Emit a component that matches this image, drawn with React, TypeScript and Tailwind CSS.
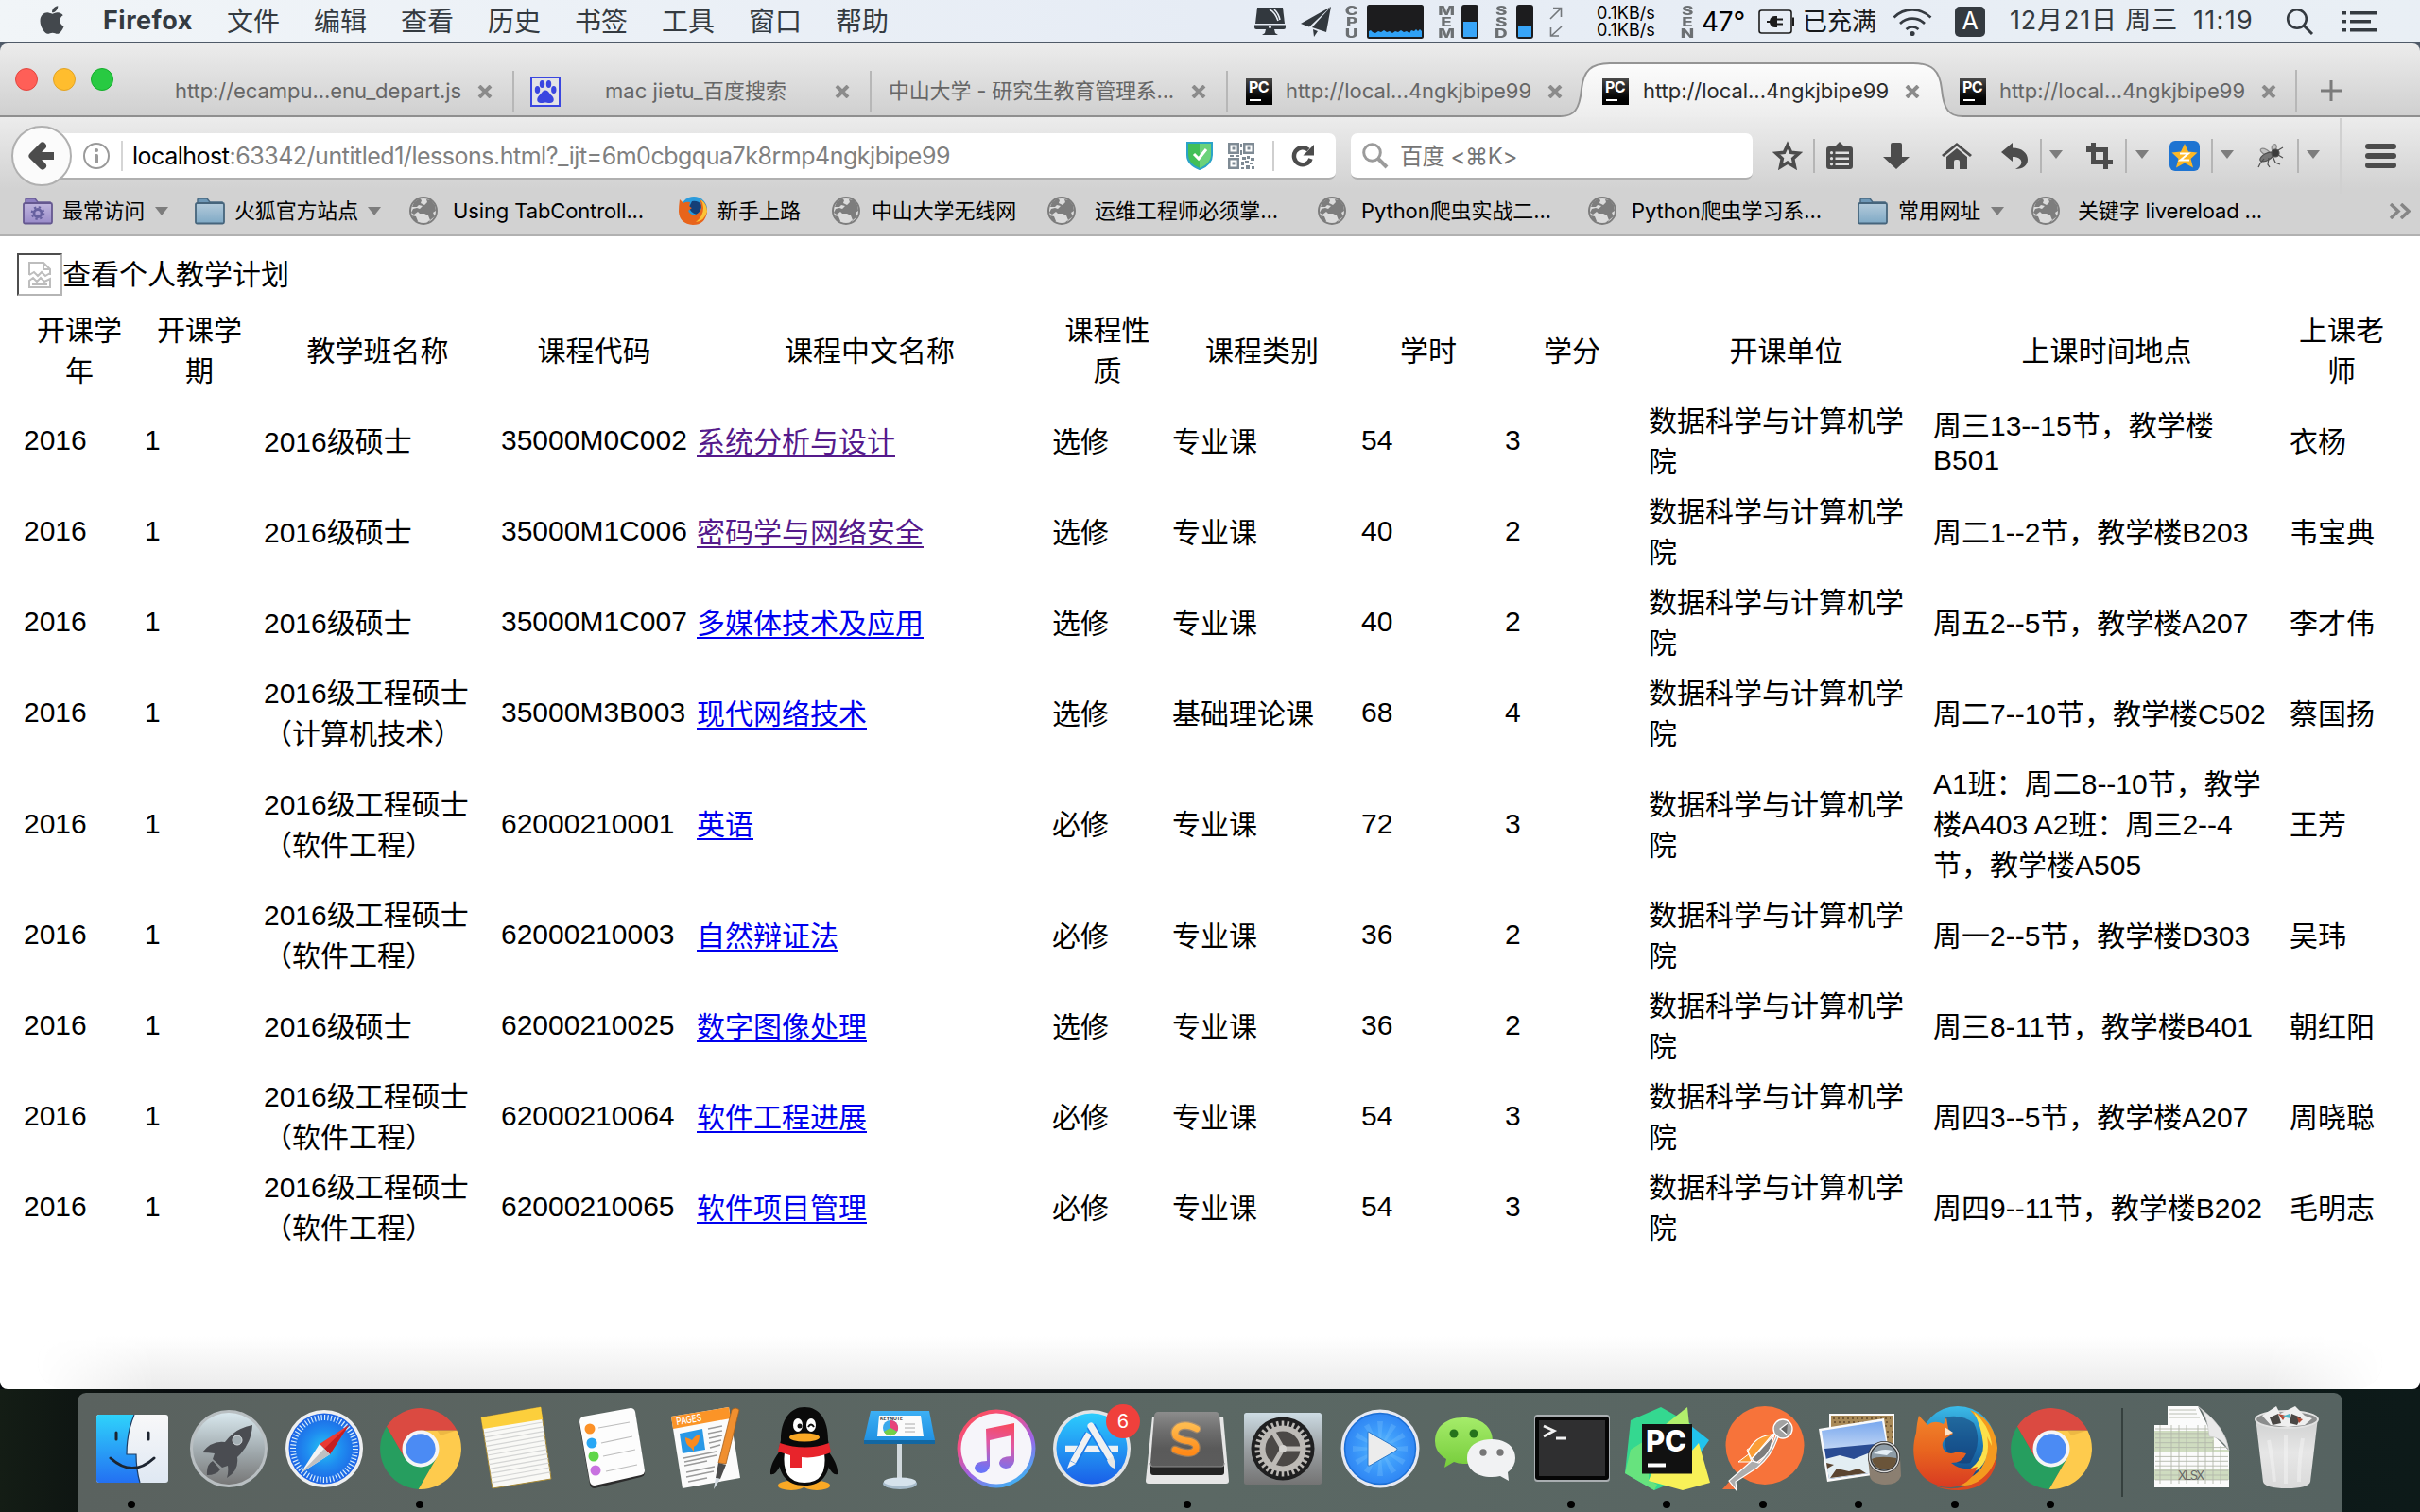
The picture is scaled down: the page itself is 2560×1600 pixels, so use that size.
import { useLayoutEffect, useRef, type ReactNode } from 'react'
import { FaApple } from 'react-icons/fa'

/* Single line of text whose tracking is adjusted so that it fills `w` pixels. */
function Fit({ w, className = '', children }: { w: number; className?: string; children: ReactNode }) {
  const ref = useRef<HTMLSpanElement>(null)
  useLayoutEffect(() => {
    const el = ref.current
    if (!el) return
    el.style.letterSpacing = '0px'
    const n = (el.textContent || '').length
    const natural = el.getBoundingClientRect().width
    el.style.letterSpacing = `${(w - natural) / n}px`
  }, [w])
  return (
    <span ref={ref} className={`inline-block shrink-0 whitespace-pre ${className}`}>
      {children}
    </span>
  )
}

/* ---------- Menu bar ---------- */

function Stacked({ t, className }: { t: string; className: string }) {
  return (
    <div className={`flex w-[16px] shrink-0 flex-col items-center text-[13px] leading-[12px] font-extrabold text-[#6c7073] ${className}`}>
      {t.split('').map((c, i) => (
        <span key={i} className="h-[12px] scale-x-[1.45]">{c}</span>
      ))}
    </div>
  )
}

function MenuBar() {
  return (
    <div className="flex h-[44px] shrink-0 items-center bg-linear-to-r from-[#f1f5f8] via-[#e6ecf5] to-[#e9eff5] pt-[1px] text-[28px] text-[#343a40]">
      <FaApple className="ml-[38px] mb-[4px] size-[34px] shrink-0 text-[#43484d]" />
      <Fit w={95} className="ml-[37px] text-[27px] font-bold">Firefox</Fit>
      <div className="ml-[36px] flex shrink-0 gap-[36px]">
        {['文件', '编辑', '查看', '历史', '书签', '工具', '窗口', '帮助'].map((m) => (
          <Fit key={m} w={56}>{m}</Fit>
        ))}
      </div>
      <svg className="ml-[386px] h-[29px] w-[35px] shrink-0" viewBox="0 0 35 29" fill="#32383e">
        <path d="M4 0H31L33 17H2Z" />
        <path d="M17 2C21 4 24 8 26 14M22 2C25 5 27 8 28 13" stroke="#e8edf5" strokeWidth="1.6" fill="none" />
        <path d="M1 18.500H34V21Q34 23 32 23H3Q1 23 1 21Z" />
        <circle cx="17.500" cy="20.500" r="1.500" fill="#e8edf5" />
        <path d="M13 23H22L23 27L26 29H9L12 27Z" />
      </svg>
      <svg className="ml-[15px] h-[32px] w-[32px] shrink-0" viewBox="0 0 32 32" fill="#32383e">
        <path d="M32 0L0 18L9 21.500Z" />
        <path d="M32 0L12 22L27 27Z" />
        <path d="M13 24L18 26L14 32Z" />
      </svg>
      <Stacked t="CPU" className="ml-[14px]" />
      <svg className="ml-[8px] h-[36px] w-[60px] shrink-0" viewBox="0 0 60 36">
        <rect width="60" height="36" rx="2.500" fill="#1c1c1e" />
        <path d="M2 34V28L4 27L6 29L9 30L12 28L15 29L18 27L21 29L24 28L27 30L30 28L33 29L36 27L39 29L42 28L45 30L47 27L50 28L52 26L54 28L56 26L58 28V34Z" fill="#2fa1f5" />
      </svg>
      <Stacked t="MEM" className="ml-[16px]" />
      <div className="ml-[8px] flex h-[36px] w-[18px] shrink-0 flex-col justify-end rounded-[3px] bg-[#1c1c1e] p-[2px]">
        <div className="h-[16px] bg-[#38a5f8]" />
      </div>
      <Stacked t="SSD" className="ml-[16px]" />
      <div className="ml-[8px] flex h-[36px] w-[18px] shrink-0 flex-col justify-end rounded-[3px] bg-[#1c1c1e] p-[2px]">
        <div className="h-[12px] bg-[#38a5f8]" />
      </div>
      <svg className="ml-[17px] h-[32px] w-[14px] shrink-0" viewBox="0 0 14 32" fill="none" stroke="#73777b" strokeWidth="1.600">
        <path d="M1 13L12 2M4 1.500H12.500V11M13 21L2 31M1.500 22V31H10" />
      </svg>
      <div className="ml-[36px] flex w-[73px] shrink-0 flex-col text-[18px] leading-[18px] text-black">
        <Fit w={73} className="h-[18px]">0.1KB/s</Fit>
        <Fit w={73} className="h-[18px]">0.1KB/s</Fit>
      </div>
      <Stacked t="SEN" className="ml-[15px]" />
      <Fit w={46} className="ml-[7px] text-[28px] text-black">47°</Fit>
      <svg className="ml-[14px] h-[26px] w-[38px] shrink-0" viewBox="0 0 38 26">
        <rect x="1" y="1" width="34" height="24" rx="2.500" fill="none" stroke="#1c1c1c" strokeWidth="1.600" />
        <path d="M36 8.500H38V17.500H36Z" fill="#1c1c1c" />
        <path d="M9 12H12Q13 7 18 7H20V9.500H26V11.500H20V14.500H26V16.500H20V19H18Q13 19 12 14H9Z" fill="#1c1c1c" />
      </svg>
      <Fit w={78} className="ml-[9px] text-[26px] text-[#17191b]">已充满</Fit>
      <svg className="ml-[17px] h-[30px] w-[42px] shrink-0" viewBox="0 0 42 30" fill="none" stroke="#343a40" strokeWidth="2.600">
        <path d="M1.500 10.500A27.500 27.500 0 0 1 40.500 10.500M8 17A18.500 18.500 0 0 1 34 17M14.500 23A9.500 9.500 0 0 1 27.500 23" />
        <circle cx="21" cy="27.500" r="2.600" fill="#343a40" stroke="none" />
      </svg>
      <div className="ml-[24px] flex h-[32px] w-[32px] shrink-0 items-center justify-center rounded-[5px] bg-[#343a40] text-[25px] text-white">A</div>
      <Fit w={178} className="ml-[26px] text-[27px]">12月21日 周三</Fit>
      <Fit w={64} className="ml-[16px] text-[27px]">11:19</Fit>
      <svg className="ml-[34px] h-[30px] w-[30px] shrink-0" viewBox="0 0 30 30" fill="none" stroke="#343a40" strokeWidth="2.600">
        <circle cx="12" cy="12" r="9.800" />
        <path d="M19 19L28 28" strokeWidth="3" />
      </svg>
      <svg className="ml-[30px] h-[22px] w-[37px] shrink-0" viewBox="0 0 37 22" fill="#343a40">
        <path d="M0 0H4V3.500H0ZM8 0H37V3.500H8ZM0 9H4V12.500H0ZM8 9H30V12.500H8ZM0 18H4V21.500H0ZM8 18H37V21.500H8Z" />
      </svg>
    </div>
  )
}

/* ---------- Tab strip ---------- */

function PcIcon() {
  return (
    <div className="flex size-[28px] shrink-0 flex-col bg-linear-to-b from-[#4a4a4a] to-black pl-[3px]">
      <span className="h-[19px] text-[16px] leading-[19px] font-bold tracking-[-0.5px] text-white">PC</span>
      <span className="mt-[3px] ml-[1px] h-[2px] w-[12px] bg-white" />
    </div>
  )
}

function Close() {
  return (
    <svg className="h-[14px] w-[16px] shrink-0" viewBox="0 0 16 14" stroke="#8b8b8b" strokeWidth="4" fill="none">
      <path d="M2 1L14 13M14 1L2 13" />
    </svg>
  )
}

function ActiveShape() {
  return (
    <svg className="absolute top-0 left-[-23px] h-[58px] w-[425px]" viewBox="0 0 425 58">
      <defs>
        <linearGradient id="tabfill" x1="0" y1="0" x2="0" y2="1">
          <stop offset="0" stopColor="#fcfcfc" />
          <stop offset="1" stopColor="#ededed" />
        </linearGradient>
      </defs>
      <path d="M0 57C14 57 20 50 22 28C24 9 32 1 52 1H373C393 1 401 9 403 28C405 50 411 57 425 57V58H0Z" fill="url(#tabfill)" />
      <path d="M0 57C14 57 20 50 22 28C24 9 32 1 52 1H373C393 1 401 9 403 28C405 50 411 57 425 57" fill="none" stroke="#949494" strokeWidth="2" />
    </svg>
  )
}

function Sep() {
  return <span className="h-[44px] w-[2px] shrink-0 bg-[#b7b7b7]" />
}

function TabStrip() {
  return (
    <div className="flex h-[78px] shrink-0 items-end rounded-t-[8px] border-b-2 border-[#8f8f8f] bg-linear-to-b from-[#ececec] to-[#d0d0d0] text-[22px] text-[#666]">
      <div className="flex h-[76px] w-[165px] shrink-0 gap-[16px] pt-[26px] pl-[16px]">
        <span className="size-[24px] rounded-full border border-[#e2463f] bg-[#ff5f57]" />
        <span className="size-[24px] rounded-full border border-[#e1a325] bg-[#ffbd2e]" />
        <span className="size-[24px] rounded-full border border-[#14ae2b] bg-[#28ca42]" />
      </div>
      <div className="flex h-[56px] w-[377px] shrink-0 items-center pt-[5px]">
        <Fit w={303} className="ml-[20px]">http://ecampu...enu_depart.js</Fit>
        <span className="ml-[17px] flex"><Close /></span>
      </div>
      <div className="flex h-[56px] w-[378px] shrink-0 items-center pt-[5px]">
        <Sep />
        <svg className="ml-[17px] size-[32px] shrink-0" viewBox="0 0 32 32" fill="#3a46e0">
          <rect x="1" y="1" width="30" height="30" fill="#e3e3e6" stroke="#3a46e0" strokeWidth="2" />
          <ellipse cx="7.500" cy="14" rx="2.700" ry="4" />
          <ellipse cx="12.500" cy="8" rx="2.700" ry="4" />
          <ellipse cx="19.500" cy="8" rx="2.700" ry="4" />
          <ellipse cx="24.800" cy="14" rx="2.700" ry="4" />
          <path d="M16 14.500C19 14.500 20 18 23 20.500C26 23.500 25 28 21 28C18 28 17 27.500 16 27.500C15 27.500 14 28 11 28C7 28 6 23.500 9 20.500C12 18 13 14.500 16 14.500Z" />
        </svg>
        <Fit w={192} className="ml-[47px]">mac jietu_百度搜索</Fit>
        <span className="ml-[51px] flex"><Close /></span>
      </div>
      <div className="flex h-[56px] w-[377px] shrink-0 items-center pt-[5px]">
        <Sep />
        <Fit w={302} className="ml-[18px]">中山大学 - 研究生教育管理系...</Fit>
        <span className="ml-[18px] flex"><Close /></span>
      </div>
      <div className="flex h-[56px] w-[377px] shrink-0 items-center pt-[5px]">
        <Sep />
        <span className="ml-[19px] flex"><PcIcon /></span>
        <Fit w={260} className="ml-[14px]">http://local...4ngkjbipe99</Fit>
        <span className="ml-[17px] flex"><Close /></span>
      </div>
      <div className="relative z-10 mb-[-2px] flex h-[58px] w-[378px] shrink-0 items-center pt-[3px] text-[#2a2a2a]">
        <ActiveShape />
        <div className="relative flex items-center">
          <span className="ml-[21px] flex"><PcIcon /></span>
          <Fit w={260} className="ml-[15px]">http://local...4ngkjbipe99</Fit>
          <span className="ml-[17px] flex"><Close /></span>
        </div>
      </div>
      <div className="flex h-[56px] w-[376px] shrink-0 items-center pt-[5px]">
        <span className="ml-[21px] flex"><PcIcon /></span>
        <Fit w={260} className="ml-[14px]">http://local...4ngkjbipe99</Fit>
        <span className="ml-[17px] flex"><Close /></span>
      </div>
      <div className="flex h-[56px] shrink-0 items-center pt-[4px]">
        <Sep />
        <svg className="ml-[25px] size-[22px]" viewBox="0 0 22 22" fill="#7b7b7b"><path d="M9.500 0H12.500V9.500H22V12.500H12.500V22H9.500V12.500H0V9.500H9.500Z" /></svg>
      </div>
    </div>
  )
}

/* ---------- Navigation toolbar ---------- */

function Caret({ className = '' }: { className?: string }) {
  return (
    <svg className={`h-[9px] w-[14px] shrink-0 ${className}`} viewBox="0 0 14 9"><path d="M0 0H14L7 9Z" fill="#7d7d7d" /></svg>
  )
}

function VLine({ className = '' }: { className?: string }) {
  return <span className={`h-[36px] w-[2px] shrink-0 bg-[#b5b5b5] ${className}`} />
}

function NavBar() {
  return (
    <div className="flex h-[82px] shrink-0 items-center">
      <div className="z-10 ml-[12px] flex size-[64px] shrink-0 items-center justify-center rounded-full border-2 border-[#b0b0b0] bg-[#fbfbfb]">
        <svg className="size-[32px]" viewBox="0 0 32 32" fill="none" stroke="#4c4c4c" strokeLinecap="round" strokeLinejoin="round">
          <path d="M29 16H8" strokeWidth="8" strokeLinecap="butt" />
          <path d="M17 5.500L6.500 16L17 26.500" strokeWidth="8" />
        </svg>
      </div>
      <div className="ml-[-26px] flex h-[49px] w-[1363px] shrink-0 items-center rounded-r-[7px] border-b-2 border-[#b0b0b0] bg-white pt-[2px] text-[25px] text-black">
        <svg className="ml-[38px] size-[28px] shrink-0" viewBox="0 0 28 28">
          <circle cx="14" cy="14" r="13" fill="none" stroke="#9a9a9a" strokeWidth="2" />
          <circle cx="14" cy="8" r="2.100" fill="#9a9a9a" />
          <rect x="12" y="12" width="4" height="10" rx="1.500" fill="#9a9a9a" />
        </svg>
        <span className="ml-[12px] h-[32px] w-[2px] shrink-0 bg-[#d5d5d5]" />
        <Fit w={865} className="ml-[10px] pt-[2px]">
          localhost<span className="text-[#808080]">:63342/untitled1/lessons.html?_ijt=6m0cbgqua7k8rmp4ngkjbipe99</span>
        </Fit>
        <svg className="ml-[250px] h-[30px] w-[28px] shrink-0" viewBox="0 0 28 30">
          <path d="M1 1H27V14C27 21 22 26 14 29C6 26 1 21 1 14Z" fill="#41bf57" stroke="#2ba3c8" strokeWidth="2" />
          <path d="M14 2H26V14C26 20 21 25 14 28Z" fill="#6bd27a" />
          <path d="M8 13L13 18L21 8" fill="none" stroke="#fff" strokeWidth="3" />
        </svg>
        <svg className="ml-[16px] size-[28px] shrink-0" viewBox="0 0 28 28" fill="#7e8a94">
          <path fillRule="evenodd" d="M0 0H12V12H0ZM2.500 2.500V9.500H9.500V2.500ZM16 0H28V12H16ZM18.500 2.500V9.500H25.500V2.500ZM0 16H12V28H0ZM2.500 18.500V25.500H9.500V18.500Z" />
          <path d="M4.500 4.500H7.500V7.500H4.500ZM20.500 4.500H23.500V7.500H20.500ZM4.500 20.500H7.500V23.500H4.500ZM13 1H15V5H13ZM13 8H15V13H13ZM15 15H19V18H15ZM20 14H23V17H20ZM24 16H28V19H24ZM18 19H22V22H18ZM14 20H17V24H14ZM23 21H27V23H23ZM19 24H23V28H19ZM25 25H28V28H25ZM14 26H17V28H14ZM2 13H6V15H2ZM8 13H12V15H8Z" />
        </svg>
        <span className="ml-[19px] h-[32px] w-[2px] shrink-0 bg-[#cfcfcf]" />
        <svg className="ml-[18px] h-[24px] w-[26px] shrink-0" viewBox="0 0 26 24">
          <path d="M20.500 15A9 9 0 1 1 18 5.500" fill="none" stroke="#4c4c4c" strokeWidth="4.500" />
          <path d="M24 0V11.500H12.500Z" fill="#4c4c4c" />
        </svg>
      </div>
      <div className="ml-[16px] flex h-[49px] w-[425px] shrink-0 items-center rounded-[7px] border-b-2 border-[#b0b0b0] bg-white pt-[2px] text-[24px] text-[#757575]">
        <svg className="ml-[12px] size-[28px]" viewBox="0 0 28 28" fill="none" stroke="#9b9b9b" strokeWidth="3">
          <circle cx="10.500" cy="10.500" r="8.800" />
          <path d="M17 17L26 26" strokeWidth="4" />
        </svg>
        <Fit w={124} className="ml-[12px] pt-[2px]">{'百度 <⌘K>'}</Fit>
      </div>
      <svg className="ml-[21px] size-[32px] shrink-0" viewBox="0 0 32 32" fill="none" stroke="#4c4c4c" strokeWidth="3.600">
        <path d="M16 4.500L19.600 12.200L28 13.100L21.700 18.800L23.500 27.500L16 23L8.500 27.500L10.300 18.800L4 13.100L12.400 12.200Z" />
      </svg>
      <VLine className="ml-[11px]" />
      <svg className="ml-[12px] h-[30px] w-[28px] shrink-0" viewBox="0 0 28 30" fill="#4c4c4c">
        <path d="M14 0L19 5H25Q28 5 28 8V26Q28 29 25 29H3Q0 29 0 26V8Q0 5 3 5H9Z" />
        <path d="M9.500 10.500H24V13H9.500ZM9.500 16.500H24V19H9.500ZM9.500 22.500H24V25H9.500Z" fill="#e0e0e0" />
        <circle cx="5.500" cy="11.700" r="1.600" fill="#e0e0e0" /><circle cx="5.500" cy="17.700" r="1.600" fill="#e0e0e0" /><circle cx="5.500" cy="23.700" r="1.600" fill="#e0e0e0" />
      </svg>
      <svg className="ml-[32px] h-[28px] w-[28px] shrink-0" viewBox="0 0 28 28" fill="#4c4c4c">
        <path d="M10 0H18Q20 0 20 2V15H28L14 28L0 15H8V2Q8 0 10 0Z" />
      </svg>
      <svg className="ml-[34px] h-[28px] w-[32px] shrink-0" viewBox="0 0 32 28" fill="#4c4c4c">
        <path d="M16 0L32 13L30 15L16 3.500L2 15L0 13Z" />
        <path d="M16 6L27 15V28H19V20Q19 18 17 18H15Q13 18 13 20V28H5V15Z" />
      </svg>
      <svg className="ml-[31px] h-[28px] w-[28px] shrink-0" viewBox="0 0 28 28" fill="#4c4c4c">
        <path d="M0 10L12 0V5.500C22 5.500 28 11 28 18C28 24 23 28 15 28C21 25 23 21 20 17.500C18 15.500 15 15 12 15V20Z" />
      </svg>
      <VLine className="ml-[13px]" />
      <Caret className="ml-[8px] mb-[3px]" />
      <svg className="ml-[25px] size-[28px] shrink-0" viewBox="0 0 28 28" fill="#4c4c4c">
        <path fillRule="evenodd" d="M5 0H10V5H23V18H28V23H23V28H18V23H5V10H0V4H5ZM10 10V18H18V10Z" />
      </svg>
      <VLine className="ml-[13px]" />
      <Caret className="ml-[9px] mb-[3px]" />
      <svg className="ml-[22px] size-[32px] shrink-0" viewBox="0 0 32 32">
        <rect width="32" height="32" rx="6" fill="#1e74d2" />
        <path d="M16 3L20 11.500L29.500 12.500L22.500 19L25 28.500L16 23.500L7 28.500L9.500 19L2.500 12.500L12 11.500Z" fill="#fdb826" />
        <path d="M11 13.500H20L11.500 20.500H21" fill="none" stroke="#fff" strokeWidth="2" />
      </svg>
      <VLine className="ml-[12px]" />
      <Caret className="ml-[8px] mb-[3px]" />
      <svg className="ml-[22px] h-[26px] w-[32px] shrink-0" viewBox="0 0 32 26" fill="none" stroke="#4f4f4f" strokeWidth="1.200">
        <path d="M16 9C8 1 1 7 12 12M19 8C15 -1 27 -2 22 7" fill="#c4c4c4" stroke="#888" />
        <ellipse cx="13" cy="14" rx="8" ry="3.600" transform="rotate(-28 13 14)" fill="#767676" />
        <circle cx="22" cy="10" r="4" fill="#3c3c3c" />
        <path d="M19 13L22 20L27 22M15 15L14 22L16 25M10 16L6 21L4 25M25 12L30 15M25 7L30 4" />
      </svg>
      <VLine className="ml-[13px]" />
      <Caret className="ml-[8px] mb-[3px]" />
      <span className="ml-[21px] h-[80px] w-[2px] shrink-0 bg-[#d0d0d0]" />
      <div className="ml-[25px] flex w-[33px] shrink-0 flex-col gap-[4px]">
        <span className="h-[6px] rounded-[3px] bg-[#4c4c4c]" />
        <span className="h-[6px] rounded-[3px] bg-[#4c4c4c]" />
        <span className="h-[6px] rounded-[3px] bg-[#4c4c4c]" />
      </div>
    </div>
  )
}

/* ---------- Bookmarks toolbar ---------- */

function Folder({ smart = false }: { smart?: boolean }) {
  return (
    <svg className="h-[29px] w-[32px] shrink-0" viewBox="0 0 32 29">
      <defs>
        <linearGradient id="fb" x1="0" y1="0" x2="0" y2="1"><stop offset="0" stopColor="#b4cbdb" /><stop offset="1" stopColor="#7fa9c5" /></linearGradient>
        <linearGradient id="fp" x1="0" y1="0" x2="0" y2="1"><stop offset="0" stopColor="#c0b6de" /><stop offset="1" stopColor="#998bc9" /></linearGradient>
      </defs>
      <path d="M3 5V2Q3 1 4 1H13L16 5H29V10H3Z" fill={smart ? '#8d7fc0' : '#6e98b7'} stroke={smart ? '#6a5d96' : '#4a6a82'} strokeWidth="1.500" />
      <rect x="1" y="6" width="30" height="21.500" rx="1.500" fill={smart ? 'url(#fp)' : 'url(#fb)'} stroke={smart ? '#655890' : '#46657c'} strokeWidth="1.800" />
      {smart && <circle cx="16" cy="16.500" r="4" fill="none" stroke="#66609f" strokeWidth="2.800" />}
      {smart && <circle cx="16" cy="16.500" r="6.300" fill="none" stroke="#66609f" strokeWidth="2" strokeDasharray="2.400 2.550" />}
    </svg>
  )
}

function Globe() {
  return (
    <svg className="size-[30px] shrink-0" viewBox="0 0 30 30">
      <circle cx="15" cy="15" r="14" fill="#dcdcdc" stroke="#7d7d7d" strokeWidth="2" />
      <path d="M5 6L11 2L13 4L12 7L16 9L19 6L18 3L23 4L27 9L28 15L25 17L27 21L22 25L20 20L16 18L11 18L9 16L5 19L2 17L4 13L8 12L11 13L14 10L10 9L8 11L3 11Z" fill="#7d7d7d" />
      <path d="M3 20L7 21L9 26L8 27L5 25ZM20 26L23 25L19 28Z" fill="#7d7d7d" />
    </svg>
  )
}

function MiniFirefox() {
  return (
    <svg className="size-[32px] shrink-0" viewBox="0 0 32 32">
      <circle cx="17" cy="15" r="14" fill="#2a9bdc" />
      <path d="M15 6Q22 5 25 10Q25 16 20 20Q13 18 12 12Z" fill="#143f78" />
      <path d="M2 4L6 8Q9 6 13 7L12 11Q14 13 15 13L11 16Q13 21 19 20Q24 18 25 13Q25 8 23 4Q31 7 31 17Q29 31 16 31Q2 30 1 17Q1 11 2 4Z" fill="#e8641b" />
      <path d="M24 4Q31 9 31 17Q28 27 19 28Q27 22 27 13Q27 8 24 4Z" fill="#fbc336" />
    </svg>
  )
}

function Bookmarks() {
  return (
    <div className="flex h-[44px] shrink-0 items-center border-b-2 border-[#b1b1b1] pb-[8px] pl-[24px] text-[22px] text-black">
      <Folder smart /><Fit w={87} className="ml-[10px] pt-[1px]">最常访问</Fit><Caret className="ml-[11px] h-[7px] w-[12px]" />
      <span className="ml-[28px] flex"><Folder /></span><Fit w={131} className="ml-[10px] pt-[1px]">火狐官方站点</Fit><Caret className="ml-[10px] h-[7px] w-[12px]" />
      <span className="ml-[30px] flex"><Globe /></span><Fit w={202} className="ml-[16px] pt-[1px]">Using TabControll...</Fit>
      <span className="ml-[36px] flex"><MiniFirefox /></span><Fit w={88} className="ml-[10px] pt-[1px]">新手上路</Fit>
      <span className="ml-[33px] flex"><Globe /></span><Fit w={153} className="ml-[12px] pt-[1px]">中山大学无线网</Fit>
      <span className="ml-[33px] flex"><Globe /></span><Fit w={194} className="ml-[20px] pt-[1px]">运维工程师必须掌...</Fit>
      <span className="ml-[42px] flex"><Globe /></span><Fit w={201} className="ml-[16px] pt-[1px]">Python爬虫实战二...</Fit>
      <span className="ml-[39px] flex"><Globe /></span><Fit w={201} className="ml-[16px] pt-[1px]">Python爬虫学习系...</Fit>
      <span className="ml-[38px] flex"><Folder /></span><Fit w={87} className="ml-[11px] pt-[1px]">常用网址</Fit><Caret className="ml-[11px] h-[7px] w-[12px]" />
      <span className="ml-[29px] flex"><Globe /></span><Fit w={195} className="ml-[19px] pt-[1px]">关键字 livereload ...</Fit>
      <svg className="ml-auto mr-[9px] h-[17px] w-[24px] shrink-0" viewBox="0 0 24 17" fill="none" stroke="#858585" strokeWidth="3.500"><path d="M2 1L10 8.500L2 16M13 1L21 8.500L13 16" /></svg>
    </div>
  )
}

/* ---------- Page ---------- */

const HEAD = ['开课学\n年', '开课学\n期', '教学班名称', '课程代码', '课程中文名称', '课程性\n质', '课程类别', '学时', '学分', '开课单位', '上课时间地点', '上课老\n师']
const UNIT = '数据科学与计算机学\n院'
const M = '2016级硕士'
const SE = '2016级工程硕士\n（软件工程）'
const ROWS: string[][] = [
  ['2016', '1', M, '35000M0C002', '系统分析与设计', '选修', '专业课', '54', '3', UNIT, '周三13--15节，教学楼\nB501', '衣杨'],
  ['2016', '1', M, '35000M1C006', '密码学与网络安全', '选修', '专业课', '40', '2', UNIT, '周二1--2节，教学楼B203', '韦宝典'],
  ['2016', '1', M, '35000M1C007', '多媒体技术及应用', '选修', '专业课', '40', '2', UNIT, '周五2--5节，教学楼A207', '李才伟'],
  ['2016', '1', '2016级工程硕士\n（计算机技术）', '35000M3B003', '现代网络技术', '选修', '基础理论课', '68', '4', UNIT, '周二7--10节，教学楼C502', '蔡国扬'],
  ['2016', '1', SE, '62000210001', '英语', '必修', '专业课', '72', '3', UNIT, 'A1班：周二8--10节，教学\n楼A403 A2班：周三2--4\n节，教学楼A505', '王芳'],
  ['2016', '1', SE, '62000210003', '自然辩证法', '必修', '专业课', '36', '2', UNIT, '周一2--5节，教学楼D303', '吴玮'],
  ['2016', '1', M, '62000210025', '数字图像处理', '选修', '专业课', '36', '2', UNIT, '周三8-11节，教学楼B401', '朝红阳'],
  ['2016', '1', SE, '62000210064', '软件工程进展', '必修', '专业课', '54', '3', UNIT, '周四3--5节，教学楼A207', '周晓聪'],
  ['2016', '1', SE, '62000210065', '软件项目管理', '必修', '专业课', '54', '3', UNIT, '周四9--11节，教学楼B202', '毛明志'],
]
const GRID = 'grid grid-cols-[118px_116px_241px_197px_366px_117px_190px_142px_142px_291px_367px_110px] gap-x-[10px] items-center'

function Page() {
  return (
    <div className="relative flex h-[1220px] shrink-0 flex-col rounded-b-[8px] bg-white font-['Liberation_Sans','Noto_Sans_CJK_SC',sans-serif] text-[30px] leading-[43px] text-black">
      <div className="absolute bottom-0 left-[40px] h-[56px] w-[2480px] rounded-[30px] bg-linear-to-b from-white to-[#ebebeb] mask-x-from-95% mask-x-to-100%" />
      <div className="flex h-[78px] items-start pt-[18px] pl-[18px]">
        <div className="flex h-[45px] w-[48px] items-center justify-center border-2 border-t-[#4d4d4d] border-r-[#b5b5b5] border-b-[#b5b5b5] border-l-[#4d4d4d]">
          <svg className="h-[28px] w-[24px]" viewBox="0 0 24 28" fill="none" stroke="#bdbdbd" strokeWidth="2">
            <path d="M1 14V1H16L23 8V14M16 1V8H23M1 14L6 11L10 15L14 11L18 15L23 12M1 27V20L5 17L9 21L13 17L17 21L23 18V27ZM4 24H20" />
          </svg>
        </div>
        <span className="pt-[1px]">查看个人教学计划</span>
      </div>
      <div className="relative flex flex-col gap-[10px] pl-[25px]">
        <div className={GRID}>
          {HEAD.map((h) => <div key={h} className="text-center whitespace-pre">{h}</div>)}
        </div>
        {ROWS.map((r, i) => (
          <div key={i} className={GRID}>
            {r.map((c, j) =>
              j === 4 ? (
                <div key={j}>
                  <a href="#" className={i < 2 ? 'text-[#551a8b] underline decoration-2 underline-offset-[4px]' : 'text-[#0000ee] underline decoration-2 underline-offset-[4px]'}>{c}</a>
                </div>
              ) : i === 0 && j === 10 ? (
                <div key={j} className="pt-[4px] leading-[36px] whitespace-pre">{c}</div>
              ) : /^[\x20-\x7e]+$/.test(c) ? (
                <div key={j} className="pb-[2px] leading-[36px] whitespace-pre">{c}</div>
              ) : (
                <div key={j} className="whitespace-pre">{c}</div>
              ),
            )}
          </div>
        ))}
      </div>
    </div>
  )
}

/* ---------- Dock ---------- */

function Grad({ id, c, r = false }: { id: string; c: string[]; r?: boolean }) {
  const stops = c.map((s, i) => <stop key={i} offset={i / (c.length - 1)} stopColor={s} />)
  return r ? <radialGradient id={id}>{stops}</radialGradient> : <linearGradient id={id} x1="0" y1="0" x2="0" y2="1">{stops}</linearGradient>
}

function Chrome() {
  return (
    <g>
      <path d="M48.700 101.900A43 43 0 0 1 15 35.600L34.100 68.750L67.900 68.750Z" fill="#269e5f" />
      <path d="M89.300 39.500A43 43 0 0 1 48.700 101.900L67.900 68.750L51 39.500Z" fill="#fecb4d" />
      <path d="M51 39.500H89.300A43 43 0 0 0 15 35.600L34.100 68.750Z" fill="#db4a41" />
      <path d="M68 39.500H89L72 45Z" fill="#dca53a" opacity=".5" />
      <circle cx="51" cy="59" r="19.500" fill="#f5f5f5" />
      <circle cx="51" cy="59" r="15.700" fill="#4b8bf4" />
    </g>
  )
}

const rays = Array.from({ length: 12 }, (_, i) => i * 30)
const teeth = Array.from({ length: 30 }, (_, i) => i * 12)
const lines = Array.from({ length: 12 }, (_, i) => i)

const ICONS: { dot?: boolean; art: ReactNode }[] = [
  {
    dot: true,
    art: (
      <g>
        <defs><Grad id="fd" c={['#2fd3fb', '#2370f2']} /><Grad id="fe" c={['#f8f8f9', '#dfe8f3']} /></defs>
        <rect x="13" y="23" width="76" height="72" rx="3" fill="url(#fe)" />
        <path d="M16 23H53Q45 42 45 65H55Q55 81 59 95H16Q13 95 13 92V26Q13 23 16 23Z" fill="url(#fd)" />
        <path d="M53 23Q45 42 45 65H55Q55 81 59 95" fill="none" stroke="#1e3c62" strokeWidth="1.200" />
        <path d="M34 42V49M68 42V49M28 69Q51 90 74 69" fill="none" stroke="#1c2430" strokeWidth="3" strokeLinecap="round" />
      </g>
    ),
  },
  {
    art: (
      <g>
        <defs><Grad id="lp" c={['#d9e8ee', '#a4aeb2', '#777777']} /></defs>
        <circle cx="51" cy="59" r="41" fill="#b9bfc2" /><circle cx="51" cy="59" r="38" fill="url(#lp)" />
        <path d="M76 34Q58 37 47 52Q33 50 23 63Q30 63 36 64L34 70L44 79L50 77Q51 84 49 90Q62 82 60 68Q75 54 76 34ZM34 72Q27 76 28 87Q38 87 42 81Z" fill="#4a4c51" />
        <circle cx="60" cy="50" r="5" fill="#a4afb4" stroke="#d4d9dc" strokeWidth="1" />
      </g>
    ),
  },
  {
    art: (
      <g>
        <defs><Grad id="sf" r c={['#25c6f2', '#1f8cf0', '#1d62e4']} /></defs>
        <circle cx="51" cy="59" r="41" fill="#eeeff0" /><circle cx="51" cy="59" r="37.500" fill="url(#sf)" />
        <circle cx="51" cy="59" r="33" fill="none" stroke="#d9eefb" strokeWidth="6" strokeDasharray="1.200 2.250" />
        <path d="M77 34L57 65L46 54Z" fill="#ea3a33" /><path d="M77 34L57 65L51 59Z" fill="#c61f22" />
        <path d="M26 85L46 54L57 65Z" fill="#f3f3f3" /><path d="M26 85L57 65L51 59Z" fill="#bfc0c2" />
      </g>
    ),
  },
  { dot: true, art: <Chrome /> },
  {
    art: (
      <g>
        <path d="M14 26L77 15L88 91L26 101Z" fill="#f9f9f6" stroke="#a88a35" strokeWidth="1" />
        <path d="M14 26L77 15L79 28L16 38Z" fill="#fccf3c" />
        <g stroke="#d4d5d4" strokeWidth="1.200">{lines.map((i) => <path key={i} d={`M${17 + i * 0.75} ${42 + i * 4.8}L${79 + i * 0.75} ${31 + i * 4.8}`} />)}</g>
      </g>
    ),
  },
  {
    art: (
      <g>
        <path d="M20 28L70 18Q74 18 75 22L85 84Q85 88 81 89L32 101Q28 101 27 97L16 34Q16 29 20 28Z" fill="#2b2b2b" />
        <path d="M20 25L70 16Q74 16 75 20L85 82Q85 86 81 87L32 98Q28 98 27 94L16 31Q16 26 20 25Z" fill="#fdfdfd" />
        <path d="M36 37L69 31M39 53L72 46M41 67L75 60M44 83L77 76" stroke="#bdbdbd" strokeWidth="1.200" />
        <circle cx="27" cy="38" r="5.500" fill="#fc9127" /><circle cx="29" cy="53" r="5.500" fill="#29a7f5" /><circle cx="31" cy="67" r="5.500" fill="#5fd648" /><circle cx="33" cy="82" r="5.500" fill="#c872e0" />
      </g>
    ),
  },
  {
    art: (
      <g>
        <path d="M12 25L73 15L85 90L24 101Z" fill="#fbfbfb" /><path d="M12 25L73 15L75 27L14 38Z" fill="#fb9427" />
        <text x="18" y="34" fontSize="11" fill="#fff" transform="rotate(-9 18 34)" fontWeight="500" textLength="27" lengthAdjust="spacingAndGlyphs">PAGES</text>
        <path d="M21 43L45 38L48 60L24 64Z" fill="#2998e6" /><path d="M27 47Q33 49 34 50Q38 44 42 45Q42 54 36 57L36 62L33 58Q27 55 27 47Z" fill="#fb8a1e" />
        <path d="M51 38L66 35M51 43L66 40M52 48L66 45M52 53L65 50M53 58L64 55M25 69L60 62M26 73L60 66M26 77L50 72M28 84L58 78M28 89L57 83M30 94L50 90" stroke="#9a9a9a" strokeWidth="1.300" />
        <path d="M76 18Q80 14 84 18L70 75L62 74Z" fill="#f08f2f" stroke="#a55f1d" strokeWidth=".8" /><path d="M62 74L70 76L64 91L59 90Z" fill="#4b4b4b" /><path d="M59 90L64 91L57 102Z" fill="#d4dce2" />
      </g>
    ),
  },
  {
    art: (
      <g>
        <ellipse cx="37" cy="98" rx="14" ry="5" fill="#f9a825" /><ellipse cx="64" cy="98" rx="14" ry="5" fill="#f9a825" />
        <path d="M28 58Q14 74 15 86Q20 88 26 76ZM73 58Q87 74 86 86Q81 88 75 76Z" fill="#0a0a0a" />
        <path d="M51 15C67 15 76 28 76 50C81 75 77 98 51 98C25 98 20 75 26 50C26 28 36 15 51 15Z" fill="#0a0a0a" />
        <path d="M30 62Q51 70 72 63Q76 95 51 95Q26 95 30 62Z" fill="#fff" />
        <ellipse cx="44" cy="34" rx="5" ry="7" fill="#fff" /><ellipse cx="58" cy="34" rx="5" ry="7" fill="#fff" /><circle cx="46" cy="35" r="2.500" fill="#111" /><path d="M55 36Q58 31 61 36" fill="none" stroke="#111" strokeWidth="2" />
        <ellipse cx="51" cy="47" rx="16" ry="4.500" fill="#f9a825" />
        <path d="M25 53Q52 62 77 53L79 63Q62 70 48 68V79H36V66L23 62Z" fill="#e8242b" />
      </g>
    ),
  },
  {
    art: (
      <g>
        <defs><Grad id="kn" c={['#3db0f5', '#2191e2']} /></defs>
        <path d="M20 19H82L88 50H13Z" fill="url(#kn)" /><path d="M13 50H88V54H13Z" fill="#1267a2" />
        <path d="M29 24H73L76 46H27Z" fill="#fbfbfb" /><circle cx="41" cy="37" r="8" fill="#3ba9eb" /><path d="M41 37L41 29A8 8 0 0 1 48 41Z" fill="#e7447b" /><path d="M41 37L48 41A8 8 0 0 1 34 41Z" fill="#75cf46" />
        <text x="30" y="29" fontSize="5" fill="#333" fontWeight="700" textLength="24">KEYNOTE</text>
        <path d="M56 33H67M56 37H67M56 41H67" stroke="#aaa" strokeWidth="1" />
        <path d="M48 54H53V92H48Z" fill="#d0d8dc" /><ellipse cx="51" cy="96" rx="18" ry="6" fill="#a7bccb" /><ellipse cx="51" cy="94" rx="17" ry="4.500" fill="#d6e3ec" />
      </g>
    ),
  },
  {
    art: (
      <g>
        <defs>
          <linearGradient id="itr" x1="0.200" y1="0" x2="0.800" y2="1"><stop offset="0" stopColor="#fd4f57" /><stop offset=".3" stopColor="#f0508c" /><stop offset=".6" stopColor="#9d64e6" /><stop offset="1" stopColor="#2fc0f7" /></linearGradient>
          <linearGradient id="itn" gradientUnits="userSpaceOnUse" x1="60" y1="30" x2="50" y2="84"><stop offset="0" stopColor="#fb4857" /><stop offset=".45" stopColor="#e058a4" /><stop offset="1" stopColor="#6a74f8" /></linearGradient>
        </defs>
        <circle cx="51" cy="59" r="41.500" fill="url(#itr)" /><circle cx="51" cy="59" r="37.500" fill="#f6f5fa" />
        <path d="M40 38L70 32V72Q69 79 61 80Q54 79 54 74Q55 67 67 67V45L44 50V77Q43 84 35 85Q28 84 28 79Q29 72 41 72Z" fill="url(#itn)" />
      </g>
    ),
  },
  {
    art: (
      <g>
        <defs><Grad id="as" c={['#2ccdfd', '#1a5fe8']} /></defs>
        <circle cx="51" cy="59" r="41" fill="#e2e4e6" /><circle cx="51" cy="59" r="37.500" fill="url(#as)" />
        <path d="M23 59H79" stroke="#eef1f4" strokeWidth="6.500" />
        <path d="M48 43L31 75" stroke="#1c78e6" strokeWidth="9" /><path d="M48 43L31 73" stroke="#f0f1f2" strokeWidth="6.500" /><path d="M28 72L34 75L25 80Z" fill="#f0f1f2" />
        <path d="M50 35L70 69" stroke="#1f80ea" strokeWidth="10" /><path d="M50 35L70 68" stroke="#f0f1f2" strokeWidth="7" strokeLinecap="round" /><path d="M67 71L73 67Q77 74 75 80Q69 78 67 71Z" fill="#e6e6e6" />
        <circle cx="84" cy="30" r="18" fill="#f0403c" />
        <text x="84" y="37" fontSize="20" fill="#fff" textAnchor="middle">6</text>
      </g>
    ),
  },
  {
    dot: true,
    art: (
      <g>
        <defs><Grad id="st" c={['#8c8c8c', '#6f6f6f', '#5a5a5a', '#5c5c5c']} /><Grad id="ss" c={['#ffbb4e', '#ff8a18']} /></defs>
        <path d="M13 25H88L94 93Q94 96 91 96H9Q6 96 6 93Z" fill="#e6e6e6" />
        <path d="M11 76H89V84Q89 87 86 87H14Q11 87 11 84Z" fill="#242424" />
        <path d="M19 20H80Q83 20 84 24L89 74Q89 78 86 78H14Q11 78 11 74L15 24Q16 20 19 20Z" fill="url(#st)" />
        <path d="M11 74Q11 78 14 78H86Q89 78 89 74" fill="none" stroke="#8b8b8b" strokeWidth="1.200" />
        <path d="M60 38Q49 32 41 36Q35 40 38 46Q42 50 52 51Q61 53 59 60Q54 67 37 60" fill="none" stroke="#ffb768" strokeWidth="9" strokeLinecap="round" opacity=".35" />
        <path d="M60 38Q49 32 41 36Q35 40 38 46Q42 50 52 51Q61 53 59 60Q54 67 37 60" fill="none" stroke="url(#ss)" strokeWidth="6.500" strokeLinecap="round" />
      </g>
    ),
  },
  {
    art: (
      <g>
        <defs><Grad id="sp" c={['#cddce4', '#9a9fa2', '#747474']} /></defs>
        <rect x="9" y="21" width="82" height="76" rx="2.500" fill="url(#sp)" />
        <circle cx="50" cy="59" r="33.500" fill="#1f1f20" />
        <circle cx="50" cy="59" r="21.500" fill="#4b4846" stroke="#bdbab6" strokeWidth="6" />
        <g fill="#bdbab6">{teeth.map((a) => <rect key={a} x="48.700" y="29.500" width="2.600" height="6" transform={`rotate(${a} 50 59)`} />)}</g>
        <path d="M50 59H72M50 59L39 40M50 59L39 78" stroke="#bdbab6" strokeWidth="5" /><circle cx="50" cy="59" r="4" fill="#d3d1ce" />
      </g>
    ),
  },
  {
    art: (
      <g>
        <defs><Grad id="pl" r c={['#66c1fc', '#3f9efb', '#2f86f4']} /></defs>
        <circle cx="51" cy="59" r="41.500" fill="#e6e9f2" /><circle cx="51" cy="59" r="37.500" fill="url(#pl)" stroke="#1d6fd4" strokeWidth="1.500" />
        <g fill="#7cc5fd" opacity=".3">{rays.map((a) => <path key={a} d="M51 59L48 30H54Z" transform={`rotate(${a} 51 59)`} />)}</g>
        <path d="M38 42Q38 40 40 42L68 58Q70 59 68 61L40 77Q38 78 38 76Z" fill="#ececec" stroke="#2876c9" strokeWidth="1" />
      </g>
    ),
  },
  {
    art: (
      <g>
        <defs><Grad id="wc" c={['#a5ec6a', '#76cc3b']} /></defs>
        <path d="M38 26C57 26 69 36 69 51C69 66 57 75 38 75Q33 75 28 73L18 79L20 70Q8 63 8 51C8 36 20 26 38 26Z" fill="url(#wc)" />
        <ellipse cx="28" cy="43" rx="4.500" ry="4.500" fill="#25731c" /><ellipse cx="49" cy="43" rx="4.500" ry="4.500" fill="#25731c" />
        <path d="M68 49C83 49 93 57 93 69Q93 78 85 84L86 93L77 88Q73 89 68 89C52 89 42 81 42 69C42 57 52 49 68 49Z" fill="#f1f2f3" />
        <circle cx="59" cy="63" r="3.700" fill="#777" /><circle cx="77" cy="63" r="3.700" fill="#777" />
      </g>
    ),
  },
  {
    dot: true,
    art: (
      <g>
        <rect x="11" y="23" width="80" height="71" rx="3.500" fill="#a9aeb1" /><rect x="12" y="25" width="78" height="67" rx="3" fill="#060606" /><rect x="16" y="29" width="70" height="59" fill="#2f2f30" />
        <path d="M21 35L32 40L21 46M34 48H45" fill="none" stroke="#f2f2f2" strokeWidth="2.800" />
      </g>
    ),
  },
  {
    dot: true,
    art: (
      <g>
        <path d="M12 29L44 15L76 33V86L37 103L6 85Z" fill="#34d890" /><path d="M12 60L31 48V92L40 97L37 103L6 85Z" fill="#67e37e" />
        <path d="M72 15L74 34H48Z" fill="#b2ef6c" /><path d="M76 35L95 50L84 66L74 60Z" fill="#22c3ec" /><path d="M84 53L96 95L67 103L31 93L36 80L76 62Z" fill="#f8f158" />
        <rect x="24" y="33" width="53" height="52.500" fill="#111" />
        <text x="28" y="62" fontSize="31" fill="#fff" fontWeight="800" textLength="43">PC</text>
        <path d="M30 74.500H49V78.500H30Z" fill="#fff" />
      </g>
    ),
  },
  {
    dot: true,
    art: (
      <g>
        <circle cx="52" cy="55.500" r="41.500" fill="#f7733a" /><path d="M7 102L16 92L23 102Z" fill="#f0713c" />
        <path d="M62 43L33 60L38 73L24 73L36 64Z" fill="#f99a32" stroke="#fff" strokeWidth="1" /><path d="M60 44Q42 45 34 62L38 70Z" fill="#fb9e36" stroke="#fff" strokeWidth="1.200" />
        <path d="M62 44L38 70L43 74L56 64Z" fill="#7d7d7d" stroke="#fff" strokeWidth="1.200" />
        <path d="M66 46Q60 66 44 79L21 94L22 103L14 93L38 72L46 74Q58 62 64 45Z" fill="#adadad" stroke="#fff" strokeWidth="1.200" />
        <circle cx="71" cy="38" r="10" fill="#a2a2a2" stroke="#fff" strokeWidth="1.400" /><path d="M76 32L68 38L75 44" fill="#666" stroke="#fff" strokeWidth="1.200" />
      </g>
    ),
  },
  {
    dot: true,
    art: (
      <g>
        <defs><Grad id="sky" c={['#79a8ee', '#c3d7f5']} /></defs>
        <rect x="19" y="22" width="69" height="60" fill="#fafafa" /><rect x="21" y="24" width="65" height="56" fill="#a98a58" />
        <path d="M23 27H84M24 31H84M78 35H85M80 41H86M80 47H86M81 53H86" stroke="#63492b" strokeWidth="1.500" strokeDasharray="2 3" />
        <path d="M8 38L77 27L85 84L17 94Z" fill="#fafafa" /><path d="M11 40L75 30L80 56L14 61Z" fill="url(#sky)" /><path d="M14 59L78 53L82 82L19 91Z" fill="#2a4c93" />
        <path d="M15 70L30 66L45 70L60 64L80 67L82 82L19 91Z" fill="#e3eef3" /><path d="M20 90L27 80L40 83L50 80L58 85ZM16 74L24 76L17 80Z" fill="#5b4531" />
        <path d="M60 68H94L95 88Q92 97 78 97Q63 96 62 88Z" fill="#8b7f71" /><circle cx="77" cy="68" r="17" fill="#333" /><circle cx="77" cy="68" r="15.500" fill="none" stroke="#dadada" strokeWidth="1.500" /><circle cx="77" cy="68" r="13.500" fill="#8e9ca7" />
        <path d="M64 70Q72 66 90 69Q90 81 77 81Q66 80 64 70Z" fill="#6a5439" /><path d="M66 64Q74 58 86 61L80 66Z" fill="#e5eef5" />
      </g>
    ),
  },
  {
    dot: true,
    art: (
      <g>
        <defs><Grad id="fxg" c={['#3cbbe8', '#1b77b6', '#143f7c']} /><Grad id="fxo" c={['#f2852a', '#e8641f', '#d83a22']} /></defs>
        <circle cx="53" cy="54" r="40" fill="url(#fxg)" /><path d="M40 26Q56 22 70 32Q80 52 66 74Q44 78 40 56Z" fill="#14376d" opacity=".55" />
        <path d="M66 18Q92 28 95 58Q94 84 72 96Q60 100 50 96Q82 88 84 62Q85 38 66 18Z" fill="#f49a1f" />
        <path d="M70 20Q88 36 89 56Q86 50 84 46Q88 68 76 80Q62 90 50 90Q80 76 80 56Q79 38 70 20Z" fill="#fde04a" />
        <path d="M12 24L21 34Q28 28 38 33L41 26L43 38L48 43L39 49Q34 56 40 62Q46 66 52 62L62 64Q58 74 46 74Q58 84 74 78Q66 98 46 100Q22 100 10 80Q3 62 9 42Q10 30 12 24Z" fill="url(#fxo)" />
        <path d="M39 36L48 42L39 46Z" fill="#fbe2c8" /><path d="M28 98Q50 106 74 94Q90 84 95 64Q92 102 54 103Q38 103 28 98Z" fill="#dc4821" />
      </g>
    ),
  },
  { dot: true, art: <Chrome /> },
]

const xlsx = (
  <g>
    <path d="M26 14H58L72 42L91 61V100H12V34H26Z" fill="#fbfbfb" />
    <path d="M12 40H75V60H91V62H12ZM12 80H91V92H12Z" fill="#cfdcc0" />
    <g stroke="#b3b8ac" strokeWidth=".9">{lines.map((i) => <path key={i} d={`M13 ${38 + i * 4.9}H${i < 4 ? 74 : 90}`} />)}<path d="M18 34V96M30 34V96M38 34V96M46 34V96M58 34V96M66 34V96M74 50V96M82 56V96M28 18H56M28 22H57M28 26H60" /></g>
    <path d="M58 14Q68 22 70 46Q82 46 91 61Q88 36 58 14Z" fill="#e9e9e9" stroke="#c4c4c4" strokeWidth=".6" />
    <text x="51" y="92" fontSize="13" textAnchor="middle" fill="#666" textLength="28">XLSX</text>
  </g>
)
const trash = (
  <g>
    <defs><Grad id="tr" c={['#cfd0d0', '#e6e6e6', '#dadada']} /></defs>
    <path d="M18 26L26 94Q28 101 51 101Q74 101 76 94L84 26Z" fill="url(#tr)" />
    <ellipse cx="51" cy="28" rx="33" ry="9" fill="#8b8d8d" stroke="#e2e2e2" strokeWidth="2" />
    <path d="M25 24L40 14L44 22L60 14L70 24L78 27L70 34L52 36L34 34Z" fill="#efefef" /><path d="M33 26L42 22L45 32L36 34ZM56 22L66 26L62 34L54 32Z" fill="#4a4744" /><path d="M42 22L50 24L47 29ZM62 26L68 28L64 32Z" fill="#b34a35" /><path d="M46 25L54 22L55 27Z" fill="#4fb5c6" />
    <path d="M32 50Q36 70 38 94M68 48Q64 70 64 94M50 44V96" stroke="#f6f6f6" strokeWidth="4" opacity=".45" fill="none" />
  </g>
)

function DockCell({ dot, children }: { dot?: boolean; children: ReactNode }) {
  return (
    <svg className="h-[126px] w-[101.5px] shrink-0 overflow-visible" viewBox="0 0 101.5 126">
      {children}
      {dot && <circle cx="50" cy="118" r="4" fill="#000" />}
    </svg>
  )
}

function Desktop() {
  return (
    <div className="flex h-[130px] shrink-0 items-end bg-linear-to-r from-[#141d15] from-0% via-[#070b0e] via-8% to-[#0d1a19]">
      <div className="ml-[82px] flex h-[126px] w-[2396px] shrink-0 rounded-t-[9px] bg-linear-to-r from-[#5a625f] via-[#5b6864] to-[#566361] pl-[7px]">
        {ICONS.map((it, i) => <DockCell key={i} dot={it.dot}>{it.art}</DockCell>)}
        <span className="mt-[16px] ml-[23px] h-[94px] w-[2px] shrink-0 bg-[#35403e]" />
        <span className="w-[21px] shrink-0" />
        <DockCell>{xlsx}</DockCell>
        <DockCell>{trash}</DockCell>
      </div>
    </div>
  )
}

export default function App() {
  return (
    <div className="flex h-[1600px] w-[2560px] flex-col overflow-hidden bg-[#070b0e] font-[Inter,'Noto_Sans_CJK_SC',sans-serif]">
      <MenuBar />
      <div className="flex shrink-0 flex-col bg-[#4f5a68] pt-[2px]">
        <TabStrip />
        <div className="flex shrink-0 flex-col bg-linear-to-b from-[#ececec] from-0% via-[#d2d2d2] via-60% to-[#d2d2d2]">
          <NavBar />
          <Bookmarks />
        </div>
      </div>
      <Page />
      <Desktop />
    </div>
  )
}
